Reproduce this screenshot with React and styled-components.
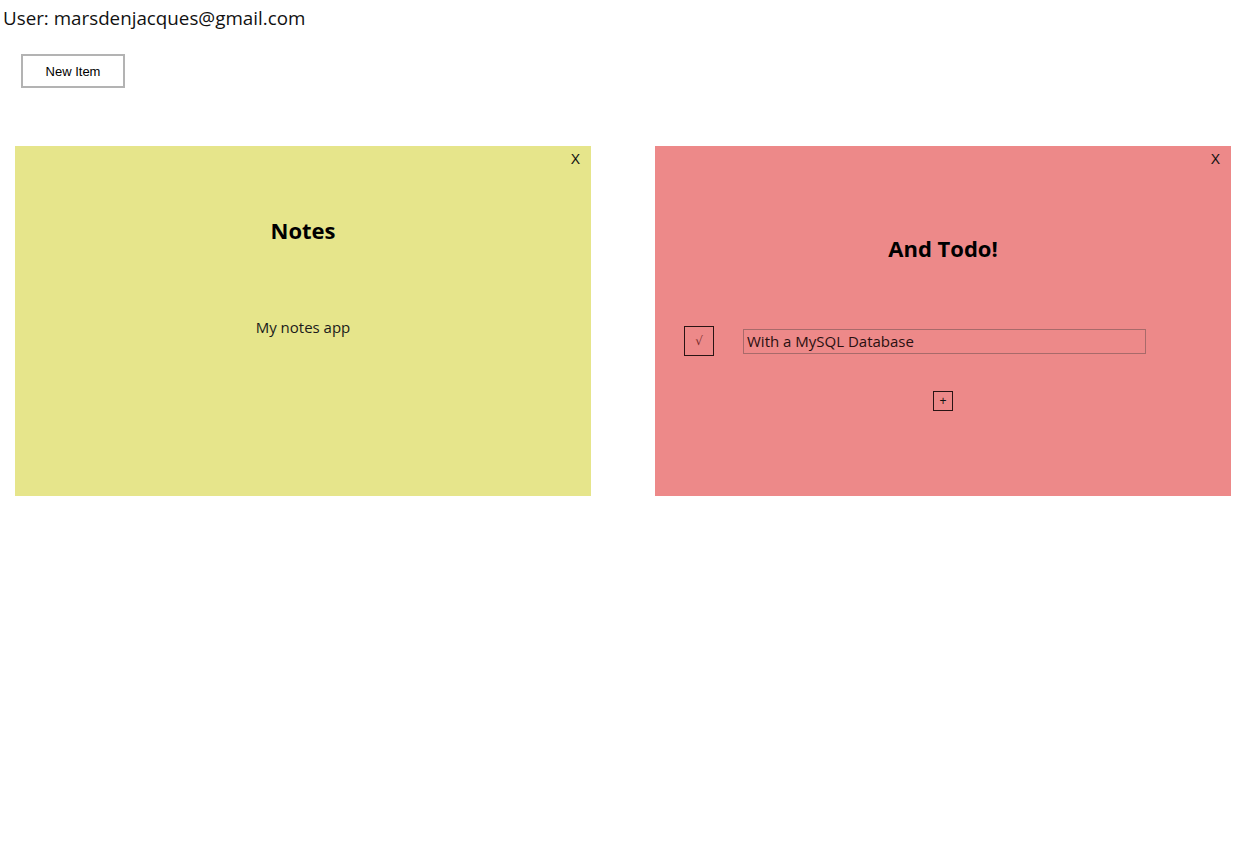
import styled, { createGlobalStyle } from "styled-components";

const GlobalStyle = createGlobalStyle`
  body {
    margin: 0;
    font-family: "Open Sans", "Noto Sans", sans-serif;
    color: #000;
    background: #fff;
  }
`;

const Page = styled.div`
  width: 1253px;
`;

const UserLine = styled.div`
  font-size: 18.8px;
  line-height: 26px;
  padding: 5px 0 0 3px;
  color: #111;
`;

const NewButton = styled.button`
  display: block;
  margin: 23px 0 0 21px;
  width: 104px;
  height: 34px;
  background: #fff;
  border: 2px solid #b3b3b3;
  font-family: "Liberation Sans", Arial, sans-serif;
  font-size: 13px;
  color: #000;
`;

const Board = styled.div`
  display: flex;
  gap: 64px;
  padding: 58px 0 0 15px;
`;

const Card = styled.div`
  position: relative;
  width: 576px;
  height: 350px;
  background: ${(p) => p.$bg};
  padding-top: ${(p) => p.$top}px;
  box-sizing: border-box;
  display: flex;
  flex-direction: column;
  align-items: center;
`;

const CloseX = styled.span`
  position: absolute;
  top: 5px;
  right: 11px;
  font-family: "Liberation Sans", Arial, sans-serif;
  font-size: 14px;
  color: #111;
`;

const Title = styled.h2`
  margin: 0;
  font-size: 22px;
  line-height: 30px;
  font-weight: 700;
`;

const NoteText = styled.p`
  margin: 71px 0 0;
  font-size: 15px;
  line-height: 22px;
  color: #1a1a1a;
`;

const TodoRow = styled.div`
  display: flex;
  align-items: center;
  align-self: flex-start;
  margin: 63px 0 0 29px;
`;

const Check = styled.button`
  width: 30px;
  height: 30px;
  padding: 0;
  background: transparent;
  border: 1px solid #2a1414;
  color: #7a2a2a;
  font-family: "DejaVu Sans", sans-serif;
  font-size: 12px;
`;

const TodoInput = styled.input`
  margin-left: 29px;
  width: 403px;
  height: 25px;
  box-sizing: border-box;
  padding: 0 3px;
  background: transparent;
  border: 1px solid #a86a6a;
  font-family: inherit;
  font-size: 15px;
  color: #2a1010;
  outline: none;
`;

const AddButton = styled.button`
  margin-top: 35px;
  width: 20px;
  height: 20px;
  padding: 0;
  background: transparent;
  border: 1px solid #2a1414;
  font-family: "Liberation Sans", Arial, sans-serif;
  font-size: 12px;
  line-height: 16px;
  color: #111;
`;

export default function App() {
  return (
    <Page>
      <GlobalStyle />
      <UserLine>User: marsdenjacques@gmail.com</UserLine>
      <NewButton>New Item</NewButton>
      <Board>
        <Card $bg="#e6e58b" $top={69}>
          <CloseX>X</CloseX>
          <Title>Notes</Title>
          <NoteText>My notes app</NoteText>
        </Card>
        <Card $bg="#ed8989" $top={87}>
          <CloseX>X</CloseX>
          <Title>And Todo!</Title>
          <TodoRow>
            <Check>√</Check>
            <TodoInput defaultValue="With a MySQL Database" />
          </TodoRow>
          <AddButton>+</AddButton>
        </Card>
      </Board>
    </Page>
  );
}
